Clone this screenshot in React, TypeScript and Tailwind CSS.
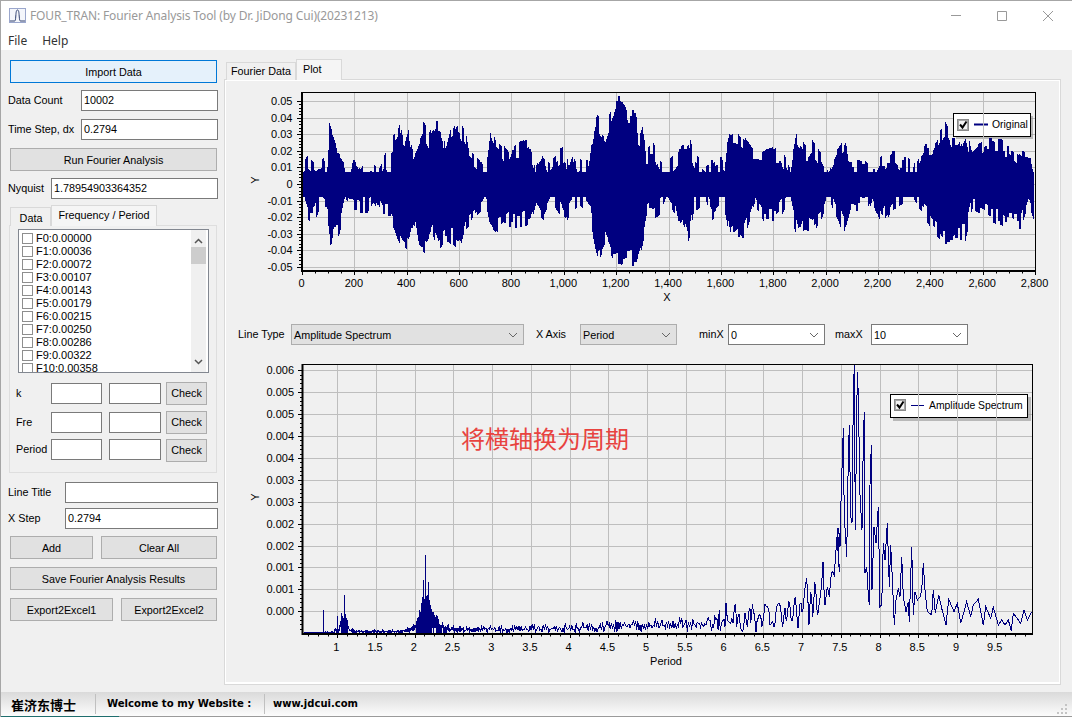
import React from "react";

const NAVY = "#000080";
const GRID = "#bebebe";

const rng = (seed: number) => () => {
  seed = (seed + 0x6d2b79f5) | 0;
  let t = Math.imul(seed ^ (seed >>> 15), 1 | seed);
  t = (t + Math.imul(t ^ (t >>> 7), 61 | t)) ^ t;
  return ((t ^ (t >>> 14)) >>> 0) / 4294967296;
};

type P = number[];

const lookup = (pts: P[], x: number) => {
  if (x <= pts[0][0]) return pts[0][1];
  for (let i = 1; i < pts.length; i++) {
    if (x <= pts[i][0]) {
      const [x0, y0] = pts[i - 1];
      const [x1, y1] = pts[i];
      return y0 + ((y1 - y0) * (x - x0)) / (x1 - x0);
    }
  }
  return pts[pts.length - 1][1];
};

// envelope read off the reference, crop coords at 3x
const z9 = (p: P[]) => p.map(([x, y]) => [295 + x / 3, 88 + y / 3]);
const z10 = (p: P[]) => p.map(([x, y]) => [665 + x / 3, 88 + y / 3]);

const waveTop = [
  ...z9([[20,225],[35,200],[60,225],[85,210],[92,240],[97,170],[102,75],[112,105],[120,125],[128,170],[145,185],[150,230],[165,240],[175,210],[190,235],[205,210],[225,225],[250,230],[270,190],[285,225],[288,145],[305,130],[318,90],[325,160],[340,105],[350,170],[365,140],[385,100],[400,130],[420,95],[440,110],[450,180],[465,120],[485,85],[510,125],[520,185],[550,210],[570,240],[580,175],[588,110],[600,140],[620,160],[640,190],[650,165],[675,160],[700,150],[715,190],[720,235],[745,175],[760,225],[790,185],[810,170],[820,230],[840,180],[850,260],[855,200],[880,215],[892,120],[905,75],[930,110],[945,70],[963,20],[985,30],[1000,65],[1022,60],[1030,150],[1045,100],[1052,175],[1075,165],[1090,210]]),
  ...z10([[0,230],[35,185],[50,140],[70,135],[85,190],[120,225],[170,200],[175,250],[185,160],[195,120],[215,115],[240,145],[260,180],[290,185],[330,175],[345,175],[375,240],[385,170],[395,130],[420,170],[440,155],[470,200],[490,235],[510,190],[540,140],[550,215],[600,215],[625,240],[650,195],[690,185],[735,210],[740,270],[745,225],[780,165],[800,160],[840,100],[860,145],[880,150],[900,100],[920,190],[960,145],[1010,150],[1040,165],[1075,190],[1100,195],[1105,260]]),
];

const waveBottom = [
  ...z9([[20,340],[40,400],[55,405],[75,360],[95,370],[98,430],[105,505],[115,445],[130,445],[140,405],[150,350],[175,370],[215,380],[235,345],[265,400],[285,400],[305,455],[320,480],[340,500],[360,430],[370,485],[395,505],[410,440],[430,490],[450,460],[470,470],[495,490],[510,430],[540,395],[570,350],[585,420],[605,445],[640,420],[680,420],[710,410],[720,370],[745,400],[770,350],[810,405],[850,350],[885,395],[895,465],[910,520],[930,480],[955,535],[985,530],[1020,535],[1040,480],[1055,400],[1090,390]]),
  ...z10([[0,340],[30,385],[40,435],[55,415],[70,465],[85,375],[110,360],[115,330],[140,400],[160,380],[170,330],[195,465],[220,450],[235,455],[270,360],[295,405],[335,405],[370,345],[380,400],[400,475],[415,425],[440,435],[465,405],[490,340],[515,395],[535,440],[555,370],[610,375],[620,345],[650,420],[680,370],[735,340],[780,400],[800,430],[835,470],[900,460],[920,375],[960,400],[1015,420],[1065,425],[1090,350],[1105,395]]),
];

const wavePath = (() => {
  const r = rng(11);
  let d = "";
  let a = 0;
  let b = 0;
  let holdA = 0;
  let holdB = 0;
  const jitter = () => (r() < 0.3 ? r() * 2 : 3 + Math.pow(r(), 0.9) * 15);
  for (let x = 302; x <= 1033; x++) {
    if (holdA-- <= 0) {
      a = jitter();
      holdA = 1 + Math.floor(r() * 2);
    }
    if (holdB-- <= 0) {
      b = jitter();
      holdB = 1 + Math.floor(r() * 2);
    }
    const top = Math.max(93, Math.min(172, lookup(waveTop, x) + a));
    const bottom = Math.min(269, Math.max(197, lookup(waveBottom, x) - b));
    d += `M${x + 0.5} ${top.toFixed(0)}V${bottom.toFixed(0)}`;
  }
  return d;
})();

const z8 = (p: P[]) => p.map(([x, y]) => [650 + x / 3, 480 + y / 3]);
const z11 = (p: P[]) => p.map(([x, y]) => [800 + x / 3, 360 + y / 3]);

const traceRight = [
  ...z8([[225,440],[228,370],[232,420],[240,430],[245,415],[250,430],[256,372],[260,440],[265,405],[270,430],[278,455],[285,400],[292,440],[298,385],[302,430],[308,372],[312,400],[318,455],[325,415],[330,405],[335,440],[342,400],[348,378],[355,385],[360,435],[368,425],[372,440],[378,395],[385,370],[392,385],[398,440],[405,385],[410,420],[416,365],[422,410],[430,405],[436,350],[444,445],[450,372],[456,395],[462,355],[470,295],[477,435],[482,335],[488,410],[494,305],[500,380],[505,395],[512,340],[519,245],[525,375],[532,320],[538,350],[546,275],[553,285],[558,210],[563,145],[568,275]]),
  ...z11([[112,540],[116,505],[120,560],[124,385],[128,265],[130,205],[133,490],[136,510],[140,590],[145,295],[148,195],[152,470],[156,490],[160,110],[163,14],[166,510],[172,36],[175,105],[180,405],[186,510],[190,245],[193,155]]),
  ...z8([[645,280],[650,260],[655,345],[658,375]]),
  ...z11([[210,375],[214,255]]),
  ...z8([[666,330],[672,140],[678,190],[685,80],[690,380],[695,375],[700,190],[705,240],[712,130],[718,320],[722,195],[727,295],[733,435],[738,360],[745,325],[750,350],[755,230],[760,350],[768,395],[775,365],[778,425],[785,200],[790,405],[795,335],[802,360],[810,350],[815,330],[820,250],[825,330],[832,395],[845,405],[850,330],[856,400],[866,345],[875,385],[888,435],[896,358],[912,395],[922,370],[932,430],[942,395],[950,365],[962,410],[970,375],[985,358],[1000,435],[1007,380],[1022,415],[1030,382],[1045,435],[1055,420],[1065,435],[1075,420],[1084,452],[1090,400],[1112,430],[1122,390],[1132,420],[1145,395]]),
];

const specUp: P[] = [[303,633],[320,632],[333,631],[339,624],[342,612],[345,612],[348,622],[352,629],[360,630],[400,630],[408,627],[416,620],[420,608],[423,590],[428,590],[431,605],[436,618],[445,623],[460,626],[500,625],[560,623],[600,621],[640,619],[690,616],[723,608]];

const specPath = (() => {
  const r = rng(5);
  let d = "M303 633";
  let low = false;
  for (let x = 303.5; x < 723; x += x < 480 ? 0.6 : 1.1) {
    const up = lookup(specUp, x);
    const lo = x < 600 ? 633 : 632;
    const v = low ? lo - r() * (lo - up) * 0.6 : up + r() * (lo - up) * 0.7;
    d += `L${x.toFixed(1)} ${v.toFixed(1)}`;
    low = !low;
  }
  let px = 723;
  let py = 620;
  traceRight.forEach(([x, y]) => {
    if (x < 835) {
      const my = (py + y) / 2 + (r() - 0.5) * 14;
      d += `L${((px + x) / 2).toFixed(1)} ${Math.min(my, 632).toFixed(1)}`;
    }
    d += `L${x.toFixed(1)} ${Math.min(y, 633).toFixed(1)}`;
    px = x;
    py = y;
  });
  return d;
})();

// solid humps under the two low-period peaks
const humpEnv: P[] = [[416,620],[420,610],[422,594],[429,594],[431,606],[436,614],[442,622],[448,626]];
const humpPath = (() => {
  const r = rng(23);
  let d = "";
  for (let x = 416; x <= 448; x++) {
    const top = lookup(humpEnv, x) + r() * 6;
    d += `M${x + 0.5} ${top.toFixed(0)}V${x > 431 && r() < 0.5 ? 628 : 633}`;
  }
  for (let x = 341; x <= 347; x++) {
    d += `M${x + 0.5} ${616 + (x % 3) * 2}V633`;
  }
  return d;
})();

const spikes: P[] = [[323.5,610],[337.5,616],[344.5,595],[425.5,555],[423,580],[428,582]];

const range = (from: number, to: number, step: number) => {
  const out: number[] = [];
  for (let v = from; v <= to + 0.001; v += step) out.push(v);
  return out;
};

const Check = ({ x, y }: { x: number; y: number }) => (
  <g>
    <rect x={x + 0.5} y={y + 0.5} width={11} height={11} fill="#f4f4f4" stroke="#8a8a8a" strokeWidth={1} />
    <rect x={x + 1.5} y={y + 1.5} width={9} height={9} fill="none" stroke="#a8a8a8" strokeWidth={1} />
    <path d={`M${x + 3} ${y + 5.5}l2.5 3l4 -6`} fill="none" stroke="#000" strokeWidth={2} />
  </g>
);

const WavePlot = () => {
  const xAt = (v: number) => 302 + v * 0.2618;
  const ys = range(0, 10, 1).map((i) => 101 + i * 16.6);
  const yLabels = ["0.05", "0.04", "0.03", "0.02", "0.01", "0", "-0.01", "-0.02", "-0.03", "-0.04", "-0.05"];
  return (
    <svg width={830} height={224} viewBox="226 81 830 224" className="block shrink-0">
      {ys.map((y) => (
        <line key={y} x1={302} x2={1035} y1={Math.round(y) + 0.5} y2={Math.round(y) + 0.5} stroke={GRID} />
      ))}
      <rect x={956} y={116} width={77} height={23} fill="#8a8a8a" opacity={0.55} />
      <rect x={953.5} y={113.5} width={77} height={23} fill="#fff" stroke="#000" />
      <Check x={957} y={119} />
      <line x1={974} x2={988} y1={124.5} y2={124.5} stroke={NAVY} strokeWidth={2} />
      <text x={992} y={128} fontSize={10.4}>Original</text>
      {range(200, 2600, 200).map((v) => (
        <line key={v} x1={Math.round(xAt(v)) + 0.5} x2={Math.round(xAt(v)) + 0.5} y1={93} y2={270} stroke={GRID} />
      ))}
      <path d={wavePath} stroke={NAVY} strokeWidth={1} fill="none" shapeRendering="crispEdges" />
      <rect x={301} y={92} width={735} height={1} fill="#000" />
      <rect x={1035} y={92} width={1} height={179} fill="#000" />
      <rect x={301} y={92} width={2} height={180} fill="#000" />
      <rect x={301} y={270} width={735} height={2} fill="#000" />
      {range(0, 50, 1).map((i) => (
        <rect key={i} x={299} y={Math.round(101 + i * 3.32)} width={2} height={1} fill="#000" />
      ))}
      {ys.map((y, i) => (
        <g key={y}>
          <rect x={297} y={Math.round(y)} width={4} height={1} fill="#000" />
          <text x={292.5} y={y + 4} fontSize={11} textAnchor="end">{yLabels[i]}</text>
        </g>
      ))}
      {range(0, 2800, 50).map((v) => (
        <rect key={v} x={Math.round(xAt(v))} y={272} width={1} height={v % 200 === 0 ? 3 : 1.5} fill="#000" />
      ))}
      {range(0, 2800, 200).map((v) => (
        <text key={v} x={xAt(v) - 0.5} y={287} fontSize={11} textAnchor="middle">
          {v.toLocaleString("en-US")}
        </text>
      ))}
      <text x={667} y={301} fontSize={11} textAnchor="middle">X</text>
      <text transform="translate(259 180) rotate(-90)" fontSize={11} textAnchor="middle">Y</text>
    </svg>
  );
};

const SpectrumPlot = () => {
  const xAt = (v: number) => 337.3 + (v - 1) * 77.46;
  const yLabels = ["0.006", "0.005", "0.005", "0.004", "0.004", "0.003", "0.003", "0.002", "0.002", "0.001", "0.001", "0.000"];
  const ys = yLabels.map((_, i) => 370.3 + i * 21.9);
  return (
    <svg width={830} height={310} viewBox="226 360 830 310" className="block shrink-0">
      {ys.map((y) => (
        <line key={y} x1={303} x2={1032} y1={Math.round(y) + 0.5} y2={Math.round(y) + 0.5} stroke={GRID} />
      ))}
      <rect x={893} y={397} width={138} height={24} fill="#8a8a8a" opacity={0.55} />
      <rect x={890.5} y={394.5} width={137} height={23} fill="#fff" stroke="#000" />
      <Check x={894} y={399} />
      <line x1={911} x2={924} y1={405.5} y2={405.5} stroke={NAVY} />
      <text x={929} y={409} fontSize={10.4}>Amplitude Spectrum</text>
      {range(1, 9.5, 0.5).map((v) => (
        <line key={v} x1={Math.round(xAt(v)) + 0.5} x2={Math.round(xAt(v)) + 0.5} y1={365} y2={634} stroke={GRID} />
      ))}
      <text x={461} y={448} fontSize={24} fill="#e8433f" fontFamily="'Noto Sans CJK SC', sans-serif">将横轴换为周期</text>
      <path d={specPath} stroke={NAVY} strokeWidth={1} fill="none" shapeRendering="crispEdges" />
      <path d={humpPath} stroke={NAVY} strokeWidth={1} fill="none" shapeRendering="crispEdges" />
      {spikes.map(([x, y]) => (
        <line key={x} x1={x} x2={x} y1={y} y2={633} stroke={NAVY} shapeRendering="crispEdges" />
      ))}
      <rect x={302} y={364} width={731} height={1} fill="#000" />
      <rect x={1032} y={364} width={1} height={271} fill="#000" />
      <rect x={301.5} y={364} width={2} height={271} fill="#000" />
      <rect x={302} y={633} width={731} height={2} fill="#000" />
      {range(0, 59, 1).map((i) => (
        <rect key={i} x={300} y={Math.round(370.3 + i * 4.38)} width={2} height={1} fill="#000" />
      ))}
      {ys.map((y, i) => (
        <g key={y}>
          <rect x={298} y={Math.round(y)} width={4} height={1} fill="#000" />
          <text x={294} y={y + 4} fontSize={11} textAnchor="end">{yLabels[i]}</text>
        </g>
      ))}
      {range(0.625, 9.875, 0.125).map((v) => (
        <rect key={v} x={Math.round(xAt(v))} y={635} width={1} height={(v * 2) % 1 === 0 ? 3 : 1.5} fill="#000" />
      ))}
      {range(1, 9.5, 0.5).map((v) => (
        <text key={v} x={xAt(v) - 1} y={651} fontSize={11} textAnchor="middle">{v}</text>
      ))}
      <text x={666} y={665} fontSize={11} textAnchor="middle">Period</text>
      <text transform="translate(259 497) rotate(-90)" fontSize={11} textAnchor="middle">Y</text>
    </svg>
  );
};

const Btn = ({ children, className = "", focused = false }: { children: React.ReactNode; className?: string; focused?: boolean }) => (
  <div className={`flex h-[23px] shrink-0 items-center justify-center border pt-[1px] ${focused ? "border-[#0078d7] bg-[#e5f1fb]" : "border-[#adadad] bg-[#e1e1e1]"} ${className}`}>
    {children}
  </div>
);

const Field = ({ value = "", className = "" }: { value?: string; className?: string }) => (
  <div className={`flex h-[21px] shrink-0 items-center border border-[#7a7a7a] bg-white pl-[2px] ${className}`}>
    {value}
  </div>
);

const Chevron = () => (
  <svg width={10} height={6} viewBox="0 0 10 6" className="absolute right-[5px] top-[7px]">
    <path d="M1 1l4 4l4 -4" fill="none" stroke="#666" />
  </svg>
);

const Combo = ({ value, className = "" }: { value: string; className?: string }) => (
  <div className={`relative flex h-[21px] shrink-0 items-center border pl-[2px] pt-[1px] ${className}`}>
    {value}
    <Chevron />
  </div>
);

const LabelRow = ({ label, value, labelWidth, inputWidth, className = "" }: { label: string; value: string; labelWidth: string; inputWidth: string; className?: string }) => (
  <div className={`-ml-[2px] flex h-[21px] w-[210px] items-center ${className}`}>
    <span className={labelWidth}>{label}</span>
    <Field value={value} className={inputWidth} />
  </div>
);

const freqs = ["F0:0.00000", "F1:0.00036", "F2:0.00072", "F3:0.00107", "F4:0.00143", "F5:0.00179", "F6:0.00215", "F7:0.00250", "F8:0.00286", "F9:0.00322", "F10:0.00358"];

const FreqList = () => (
  <div className="flex h-[144px] w-[191px] overflow-hidden border border-[#828790] bg-white pr-[2px]">
    <div className="flex-1 overflow-hidden pl-[3px] pt-[2px]">
      {freqs.map((f) => (
        <div key={f} className="flex h-[13px] items-center gap-[3px] text-[11px] leading-[13px]">
          <span className="h-[11px] w-[11px] shrink-0 border border-[#8e8e8e] bg-white" />
          {f}
        </div>
      ))}
    </div>
    <div className="flex w-[15px] flex-col items-center bg-[#f0f0f0]">
      <svg width={9} height={6} viewBox="0 0 9 6" className="mt-[8px]">
        <path d="M1 5l3.5 -3.5l3.5 3.5" fill="none" stroke="#555" strokeWidth={1.5} />
      </svg>
      <div className="mt-[3px] h-[17px] w-full bg-[#cdcdcd]" />
      <svg width={9} height={6} viewBox="0 0 9 6" className="mt-[95px]">
        <path d="M1 1l3.5 3.5l3.5 -3.5" fill="none" stroke="#555" strokeWidth={1.5} />
      </svg>
    </div>
  </div>
);

const CheckRow = ({ label, className = "", btnClass = "" }: { label: string; className?: string; btnClass?: string }) => (
  <div className={`-ml-[2px] flex h-[21px] items-center ${className}`}>
    <span className="w-[35px]">{label}</span>
    <Field className="w-[51px]" />
    <Field className="ml-[7px] w-[52px]" />
    <Btn className={`ml-[5px] w-[41px] ${btnClass}`}>Check</Btn>
  </div>
);

const LeftPanel = () => (
  <div className="flex w-[223px] shrink-0 flex-col pl-[9px] pt-[10px]">
    <Btn focused className="w-[207px]">Import Data</Btn>
    <LabelRow label="Data Count" value="10002" labelWidth="w-[73px]" inputWidth="w-[137px]" className="mt-[7px]" />
    <LabelRow label="Time Step, dx" value="0.2794" labelWidth="w-[73px]" inputWidth="w-[137px]" className="mt-[8px]" />
    <Btn className="mt-[8px] w-[207px]">Run Fourier Analysis</Btn>
    <LabelRow label="Nyquist" value="1.78954903364352" labelWidth="w-[43px]" inputWidth="w-[167px]" className="mt-[7px]" />
    <div className="relative z-10 -mb-px mt-[6px] flex h-[21px] items-end">
      <div className="flex h-[19px] w-[41px] items-center justify-center border border-b-0 border-[#d9d9d9] bg-[#f0f0f0] pl-[1px] pt-[2px]">Data</div>
      <div className="flex h-[21px] w-[106px] items-center justify-center border border-b-0 border-[#d9d9d9] bg-[#f5f5f5] pb-[2px]">Frequency / Period</div>
    </div>
    <div className="-ml-px flex h-[248px] w-[208px] flex-col border border-[#dedede] pl-[8px] pt-[3px]">
      <FreqList />
      <CheckRow label="k" className="mt-[10px]" btnClass="-mt-px" />
      <CheckRow label="Fre" className="mt-[8px]" btnClass="-mt-px" />
      <CheckRow label="Period" className="mt-[6px]" btnClass="mt-[1px]" />
    </div>
    <LabelRow label="Line Title" value="" labelWidth="w-[57px]" inputWidth="w-[153px]" className="mt-[9px]" />
    <LabelRow label="X Step" value="0.2794" labelWidth="w-[57px]" inputWidth="w-[153px]" className="mt-[5px]" />
    <div className="mt-[7px] flex gap-[8px]">
      <Btn className="w-[83px]">Add</Btn>
      <Btn className="w-[116px]">Clear All</Btn>
    </div>
    <Btn className="mt-[8px] w-[207px]">Save Fourier Analysis Results</Btn>
    <div className="mt-[8px] flex gap-[8px]">
      <Btn className="w-[103px]">Export2Excel1</Btn>
      <Btn className="w-[96px]">Export2Excel2</Btn>
    </div>
  </div>
);

const RightPanel = () => (
  <div className="flex flex-1 flex-col pt-[9px]">
    <div className="relative z-10 -mb-px flex h-[21px] items-end pl-[2px]">
      <div className="flex h-[18px] w-[70px] items-center justify-center border border-b-0 border-[#d9d9d9] bg-[#f0f0f0]">Fourier Data</div>
      <div className="flex h-[21px] w-[46px] items-start border border-b-0 border-[#d9d9d9] bg-[#f5f5f5] pl-[6px] pt-[4px]">Plot</div>
    </div>
    <div className="h-[606px] w-[837px] border border-[#d9d9d9]">
      <div className="flex h-full flex-col border border-b-2 border-white">
        <WavePlot />
        <div className="mt-[19px] flex h-[21px] items-center pl-[12px]">
          <span className="w-[53px]">Line Type</span>
          <Combo value="Amplitude Spectrum" className="w-[233px] border-[#adadad] bg-[#e1e1e1]" />
          <span className="ml-[12px] w-[44px]">X Axis</span>
          <Combo value="Period" className="w-[97px] border-[#adadad] bg-[#e1e1e1]" />
          <span className="ml-[22px] w-[29px]">minX</span>
          <Combo value="0" className="w-[97px] border-[#7a7a7a] bg-white" />
          <span className="ml-[10px] w-[36px]">maxX</span>
          <Combo value="10" className="w-[97px] border-[#7a7a7a] bg-white" />
        </div>
        <div className="mt-[15px]">
          <SpectrumPlot />
        </div>
      </div>
    </div>
  </div>
);

const TitleBar = () => (
  <div className="flex h-[30px] shrink-0 items-center bg-white">
    <svg width={17} height={16} viewBox="0 0 17 16" className="ml-[8px]">
      <rect x={0.5} y={0.5} width={16} height={14} fill="#f4f6fb" stroke="#9aa6cc" />
      <path d="M1 13h4.5c1 0 1 -1.5 1.3 -5c.3 -4 .5 -6 1.7 -6s1.4 2 1.7 6c.3 3.5 .4 5 1.3 5H16" fill="none" stroke="#30406f" />
    </svg>
    <span className="ml-[4px] text-[12px] tracking-[-0.13px] text-[#999999] font-['Noto_Sans',sans-serif]">
      FOUR_TRAN: Fourier Analysis Tool (by Dr. JiDong Cui)(20231213)
    </span>
    <svg width={120} height={14} viewBox="0 0 120 14" className="ml-auto mr-[2px]">
      <path d="M1 6.5h10M47.5 2.5h9v9h-9zM93 2l10 10M103 2l-10 10" fill="none" stroke="#999" />
    </svg>
  </div>
);

const Menu = () => (
  <div className="flex h-[19px] shrink-0 items-center gap-[15px] bg-white pl-[7px] text-[12px] text-[#333333] font-['Noto_Sans',sans-serif]">
    <span>File</span>
    <span>Help</span>
  </div>
);

const StatusBar = () => (
  <div className="flex h-[24px] shrink-0 items-center bg-gradient-to-b from-[#dadada] to-[#fcfcfc] font-bold text-black">
    <span className="w-[94px] pl-[10px] text-[13px] font-['Noto_Sans_CJK_SC',sans-serif]">崔济东博士</span>
    <span className="h-[20px] w-px bg-[#c0c0c0]" />
    <span className="w-[168px] pl-[11px] text-[10.1px] font-['DejaVu_Sans',sans-serif]">Welcome to my Website :</span>
    <span className="h-[20px] w-px bg-[#c0c0c0]" />
    <span className="pl-[8px] text-[10px] font-['DejaVu_Sans',sans-serif]">www.jdcui.com</span>
    <svg width={11} height={11} viewBox="0 0 11 11" className="ml-auto mr-[4px] mt-[8px]">
      <path d="M8 1h2v2h-2zM4 5h2v2h-2zM8 5h2v2h-2zM0 9h2v2h-2zM4 9h2v2h-2zM8 9h2v2h-2z" fill="#c4c4c4" />
    </svg>
  </div>
);

const App = () => (
  <div className="flex h-[717px] w-[1072px] flex-col overflow-hidden border-l border-t border-[#a6a6a6] bg-[#f0f0f0] text-[10.8px] leading-none text-black font-['Liberation_Sans',sans-serif]">
    <TitleBar />
    <Menu />
    <div className="flex h-[642px] shrink-0">
      <LeftPanel />
      <RightPanel />
    </div>
    <StatusBar />
    <div className="flex h-px shrink-0 bg-[#9a9a9a]">
      <span className="w-[118px] bg-[#1f6e6e]" />
    </div>
  </div>
);

export default App;
